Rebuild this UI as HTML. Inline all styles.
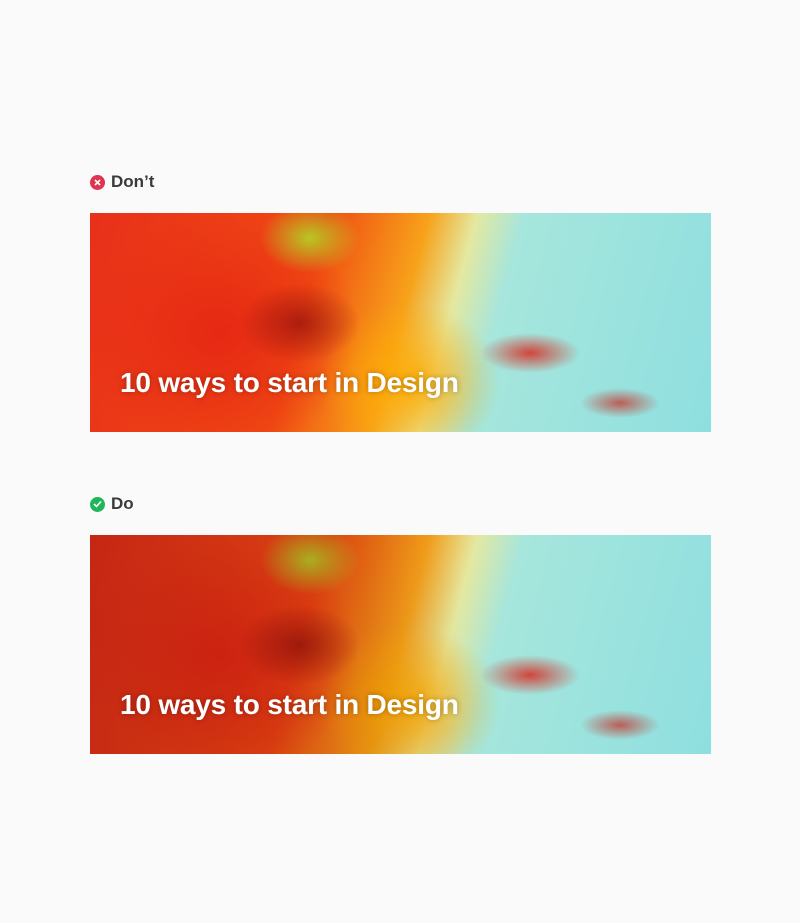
<!DOCTYPE html>
<html><head><style>
body{margin:0;background:#fafafa;width:800px;height:923px;position:relative;font-family:"Liberation Sans",sans-serif;overflow:hidden}
.lab{position:absolute;left:90px;font-weight:bold;font-size:17px;color:#3a3a3a;display:flex;align-items:center}
.ic{width:15px;height:15px;border-radius:50%;margin-right:6px;display:inline-flex;align-items:center;justify-content:center}
.ban{position:absolute;left:90px;width:621px;height:219px;overflow:hidden;
background:
radial-gradient(ellipse 60px 40px at 210px 110px,rgba(130,10,10,.6),transparent),
radial-gradient(ellipse 50px 20px at 440px 140px,rgba(220,30,20,.8),transparent),
radial-gradient(ellipse 40px 15px at 530px 190px,rgba(200,40,30,.7),transparent),
radial-gradient(ellipse 50px 35px at 220px 25px,rgba(170,230,40,.8),transparent),
radial-gradient(ellipse 90px 80px at 320px 170px,rgba(255,170,0,.9),transparent),
radial-gradient(ellipse 140px 120px at 130px 120px,rgba(230,40,20,1),transparent),
linear-gradient(105deg,#e8301a 0%,#f04a12 35%,#f7a21a 50%,#e4e8a0 57%,#a6e6dc 64%,#8fdfe0 100%)}
.t{position:absolute;left:30px;top:154px;color:#fff;font-weight:bold;font-size:28px;letter-spacing:-.2px;text-shadow:0 0 6px rgba(0,0,0,.3)}
.ov{position:absolute;inset:0;background:linear-gradient(90deg,rgba(60,0,0,.2),rgba(60,0,0,.1) 45%,transparent 60%)}
</style></head><body>
<div class="lab" style="top:172px"><span class="ic" style="background:#e0334f"><svg width="7" height="7" viewBox="0 0 7 7"><path d="M1 1L6 6M6 1L1 6" stroke="#fff" stroke-width="1.6"/></svg></span>Don’t</div>
<div class="ban" style="top:213px"><div class="t">10 ways to start in Design</div></div>
<div class="lab" style="top:494px"><span class="ic" style="background:#1fb55a"><svg width="9" height="8" viewBox="0 0 9 8"><path d="M1 4L3.5 6.5L8 1.5" stroke="#fff" stroke-width="1.6" fill="none"/></svg></span>Do</div>
<div class="ban" style="top:535px"><div class="ov"></div><div class="t">10 ways to start in Design</div></div>
</body></html>
